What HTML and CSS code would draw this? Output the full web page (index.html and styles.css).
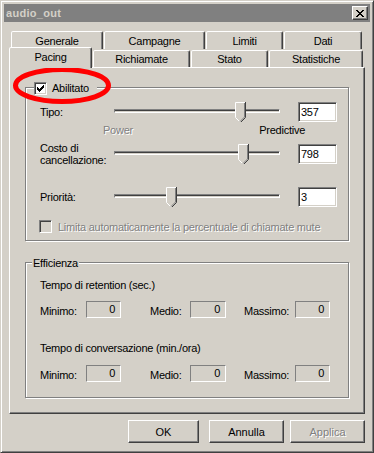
FILE: index.html
```html
<!DOCTYPE html>
<html lang="it">
<head>
  <meta charset="UTF-8" />
  <title>audio_out</title>
  <link rel="stylesheet" href="styles.css">
</head>
<body>
  <div class="window">
    <div class="titlebar">
      <span class="title">audio_out</span>
      <span class="close-btn">
        <svg width="8" height="7" viewBox="0 0 8 7">
          <path d="M0 0h2v1H0z M6 0h2v1H6z M1 1h2v1H1z M5 1h2v1H5z M2 2h4v1H2z M3 3h2v1H3z M2 4h4v1H2z M1 5h2v1H1z M5 5h2v1H5z M0 6h2v1H0z M6 6h2v1H6z" fill="#000"/>
        </svg>
      </span>
    </div>

    <div class="content">
      <div class="tabs">
        <div class="tab-row row-back">
          <div class="tab t-generale">Generale</div>
          <div class="tab t-campagne">Campagne</div>
          <div class="tab t-limiti">Limiti</div>
          <div class="tab t-dati">Dati</div>
        </div>
        <div class="tab-row row-front">
          <div class="tab active t-pacing">Pacing</div>
          <div class="tab t-richiamate">Richiamate</div>
          <div class="tab t-stato">Stato</div>
          <div class="tab t-statistiche">Statistiche</div>
        </div>
      </div>

      <div class="panel">
        <div class="group group-main">
          <div class="legend legend-check">
            <span class="check">
              <svg width="11" height="11" viewBox="0 0 11 11">
                <path d="M2 4h1v3H2z M3 5h1v3H3z M4 6h1v3H4z M5 5h1v3H5z M6 4h1v3H6z M7 3h1v3H7z M8 2h1v3H8z" fill="#000"/>
              </svg>
            </span>
            <span>Abilitato</span>
          </div>

          <div class="slider-row row-tipo">
            <span class="field-label">Tipo:</span>
            <div class="slider">
              <div class="track"></div>
              <svg class="thumb" style="left:121px" width="11" height="20" viewBox="0 0 11 20">
                <polygon points="0,0 11,0 11,15 5.5,20 0,15" fill="#d4d0c8"/>
                <path d="M0.5 15.5V0.5H10" stroke="#fff" fill="none"/>
                <path d="M0.5 15.5L4.5 19.5" stroke="#fff" fill="none"/>
                <path d="M10.5 0V15.5L5.5 20.5" stroke="#404040" fill="none"/>
                <path d="M9.5 1V15L5 19.5" stroke="#808080" fill="none"/>
              </svg>
            </div>
            <span class="value-box">357</span>
          </div>

          <div class="scale">
            <span class="disabled">Power</span>
            <span>Predictive</span>
          </div>

          <div class="slider-row row-costo">
            <span class="field-label two-lines">Costo di<br>cancellazione:</span>
            <div class="slider">
              <div class="track"></div>
              <svg class="thumb" style="left:124px" width="11" height="20" viewBox="0 0 11 20">
                <polygon points="0,0 11,0 11,15 5.5,20 0,15" fill="#d4d0c8"/>
                <path d="M0.5 15.5V0.5H10" stroke="#fff" fill="none"/>
                <path d="M0.5 15.5L4.5 19.5" stroke="#fff" fill="none"/>
                <path d="M10.5 0V15.5L5.5 20.5" stroke="#404040" fill="none"/>
                <path d="M9.5 1V15L5 19.5" stroke="#808080" fill="none"/>
              </svg>
            </div>
            <span class="value-box">798</span>
          </div>

          <div class="slider-row row-priorita">
            <span class="field-label">Priorità:</span>
            <div class="slider">
              <div class="track"></div>
              <svg class="thumb" style="left:52px" width="11" height="20" viewBox="0 0 11 20">
                <polygon points="0,0 11,0 11,15 5.5,20 0,15" fill="#d4d0c8"/>
                <path d="M0.5 15.5V0.5H10" stroke="#fff" fill="none"/>
                <path d="M0.5 15.5L4.5 19.5" stroke="#fff" fill="none"/>
                <path d="M10.5 0V15.5L5.5 20.5" stroke="#404040" fill="none"/>
                <path d="M9.5 1V15L5 19.5" stroke="#808080" fill="none"/>
              </svg>
            </div>
            <span class="value-box">3</span>
          </div>

          <div class="check-row">
            <span class="check check-off"></span>
            <span class="disabled">Limita automaticamente la percentuale di chiamate mute</span>
          </div>
        </div>

        <div class="group group-eff">
          <div class="legend legend-text">Efficienza</div>

          <div class="eff-title">Tempo di retention (sec.)</div>
          <div class="stat-row">
            <span>Minimo:</span>
            <span class="stat-box">0</span>
            <span class="stat-mid">Medio:</span>
            <span class="stat-box">0</span>
            <span class="stat-max">Massimo:</span>
            <span class="stat-box">0</span>
          </div>

          <div class="eff-title eff-second">Tempo di conversazione (min./ora)</div>
          <div class="stat-row stat-second">
            <span>Minimo:</span>
            <span class="stat-box">0</span>
            <span class="stat-mid">Medio:</span>
            <span class="stat-box">0</span>
            <span class="stat-max">Massimo:</span>
            <span class="stat-box">0</span>
          </div>
        </div>
      </div>

      <div class="buttons">
        <button class="btn btn-ok">OK</button>
        <button class="btn btn-cancel">Annulla</button>
        <button class="btn btn-apply" disabled>Applica</button>
      </div>
    </div>

    <!-- red marker drawn on the screenshot -->
    <svg class="marker" width="106" height="44" viewBox="0 0 106 44">
      <ellipse cx="52" cy="21.5" rx="46.5" ry="16" fill="none" stroke="#ff0000" stroke-width="5"/>
    </svg>
  </div>
</body>
</html>
```

FILE: styles.css
```css
* {
  box-sizing: border-box;
}
body {
  margin: 0;
  background: #d4d0c8;
  font-family: "Liberation Sans", Arial, sans-serif;
  font-size: 11px;
  letter-spacing: -0.25px;
  color: #000;
}
.window {
  position: relative;
  width: 374px;
  height: 453px;
  padding: 3px;
  background: #d4d0c8;
  border: 1px solid;
  border-color: #d4d0c8 #404040 #404040 #d4d0c8;
  box-shadow: inset 1px 1px 0 #fff, inset -1px -1px 0 #808080;
}

/* title bar */
.titlebar {
  height: 18px;
  background: #808080;
  display: flex;
  align-items: center;
  justify-content: space-between;
  padding: 0 2px 0 2px;
}
.title {
  color: #d4d0c8;
  font-weight: bold;
  font-size: 11px;
  letter-spacing: 0.3px;
}
.close-btn {
  width: 16px;
  height: 14px;
  display: flex;
  align-items: center;
  justify-content: center;
  background: #d4d0c8;
  border: 1px solid;
  border-color: #fff #404040 #404040 #fff;
  box-shadow: inset -1px -1px 0 #808080;
}

.content {
  padding: 9px 5px 0 5px;
}

/* tabs */
.tab-row {
  display: flex;
  height: 18px;
  align-items: flex-start;
}
.row-back {
  margin-left: 2px;
  gap: 1px;
}
.tab {
  height: 18px;
  display: flex;
  align-items: center;
  justify-content: center;
  background: #d4d0c8;
  border: 1px solid;
  border-bottom: 0;
  border-color: #fff #404040 transparent #fff;
  border-radius: 2px 2px 0 0;
  box-shadow: inset -1px 0 0 #808080;
}
.row-front .tab {
  margin-top: 1px;
  height: 17px;
  margin-left: 1px;
}
.row-front .tab.active {
  position: relative;
  z-index: 1;
  margin-top: -2px;
  margin-left: 0;
  height: 21px;
  padding-bottom: 2px;
}
.t-generale { width: 92px; }
.t-campagne { width: 101px; }
.t-limiti { width: 77px; }
.t-dati { width: 78px; }
.t-pacing { width: 83px; }
.t-richiamate { width: 97px; }
.t-stato { width: 77px; }
.t-statistiche { width: 94px; }

/* page */
.panel {
  height: 347px;
  padding: 19px 0 0 15px;
  border: 1px solid;
  border-color: #fff #404040 #404040 #fff;
  box-shadow: inset -1px -1px 0 #808080;
}
.group {
  width: 324px;
  padding-left: 14px;
  border: 1px solid #808080;
  box-shadow: 1px 1px 0 #fff, inset 1px 1px 0 #fff;
}
.group-main {
  height: 154px;
}
.group-eff {
  height: 136px;
  margin-top: 21px;
}
.legend {
  display: flex;
  width: fit-content;
  align-items: center;
  background: #d4d0c8;
}
.legend-check {
  height: 14px;
  margin-top: -7px;
  margin-left: -6px;
  gap: 5px;
  padding-right: 8px;
}
.legend-text {
  height: 13px;
  margin-top: -7px;
  margin-left: -8px;
  padding: 0 1px;
}

.check {
  width: 13px;
  height: 13px;
  display: block;
  background: #fff;
  border: 1px solid;
  border-color: #808080 #fff #fff #808080;
  box-shadow: inset 1px 1px 0 #404040, inset -1px -1px 0 #d4d0c8;
}
.check svg {
  display: block;
}
.check-off {
  background: #d4d0c8;
}

.slider-row {
  display: flex;
  align-items: center;
}
.row-tipo {
  height: 21px;
  margin-top: 6px;
}
.row-costo {
  height: 26px;
  margin-top: 4px;
}
.row-priorita {
  height: 21px;
  margin-top: 19px;
}
.field-label {
  width: 74px;
}
.two-lines {
  line-height: 12px;
}
.slider {
  position: relative;
  width: 166px;
  height: 20px;
  padding-top: 7px;
}
.track {
  height: 4px;
  border: 1px solid;
  border-color: #808080 #fff #fff #808080;
  box-shadow: inset 0 1px 0 #404040;
}
.thumb {
  position: absolute;
  top: 0;
}
.value-box {
  width: 39px;
  height: 20px;
  margin-left: 18px;
  padding-left: 2px;
  line-height: 18px;
  background: #fff;
  border: 1px solid;
  border-color: #808080 #fff #fff #808080;
  box-shadow: inset 1px 1px 0 #404040, inset -1px -1px 0 #d4d0c8;
}

.scale {
  display: flex;
  justify-content: space-between;
  width: 202px;
  height: 15px;
  margin-left: 63px;
  align-items: center;
}
.disabled {
  color: #808080;
  text-shadow: 1px 1px 0 #fff;
}

.check-row {
  display: flex;
  align-items: center;
  height: 13px;
  margin-top: 13px;
  margin-left: -1px;
  gap: 6px;
}

.eff-title {
  line-height: 13px;
  margin-top: 10px;
}
.eff-second {
  margin-top: 24px;
}
.stat-row {
  display: grid;
  grid-template-columns: 46px 35px 69px 36px 69px 35px;
  align-items: end;
  height: 17px;
  margin-top: 9px;
  line-height: 13px;
}
.stat-second {
  margin-top: 10px;
}
.stat-mid {
  padding-left: 29px;
}
.stat-max {
  padding-left: 18px;
}
.stat-box {
  height: 17px;
  padding-right: 5px;
  text-align: right;
  line-height: 15px;
  border: 1px solid;
  border-color: #808080 #fff #fff #808080;
}

/* dialog buttons */
.buttons {
  display: flex;
  justify-content: flex-end;
  margin-top: 6px;
}
.btn {
  width: 75px;
  height: 23px;
  padding: 0;
  font: inherit;
  color: #000;
  background: #d4d0c8;
  border: 1px solid;
  border-color: #fff #404040 #404040 #fff;
  box-shadow: inset -1px -1px 0 #808080;
}
.btn-ok {
  width: 71px;
  margin-right: 10px;
}
.btn-cancel {
  margin-right: 6px;
}
.btn-apply {
  color: #808080;
  text-shadow: 1px 1px 0 #fff;
}

.marker {
  position: absolute;
  left: 9px;
  top: 63px;
  pointer-events: none;
}
```
